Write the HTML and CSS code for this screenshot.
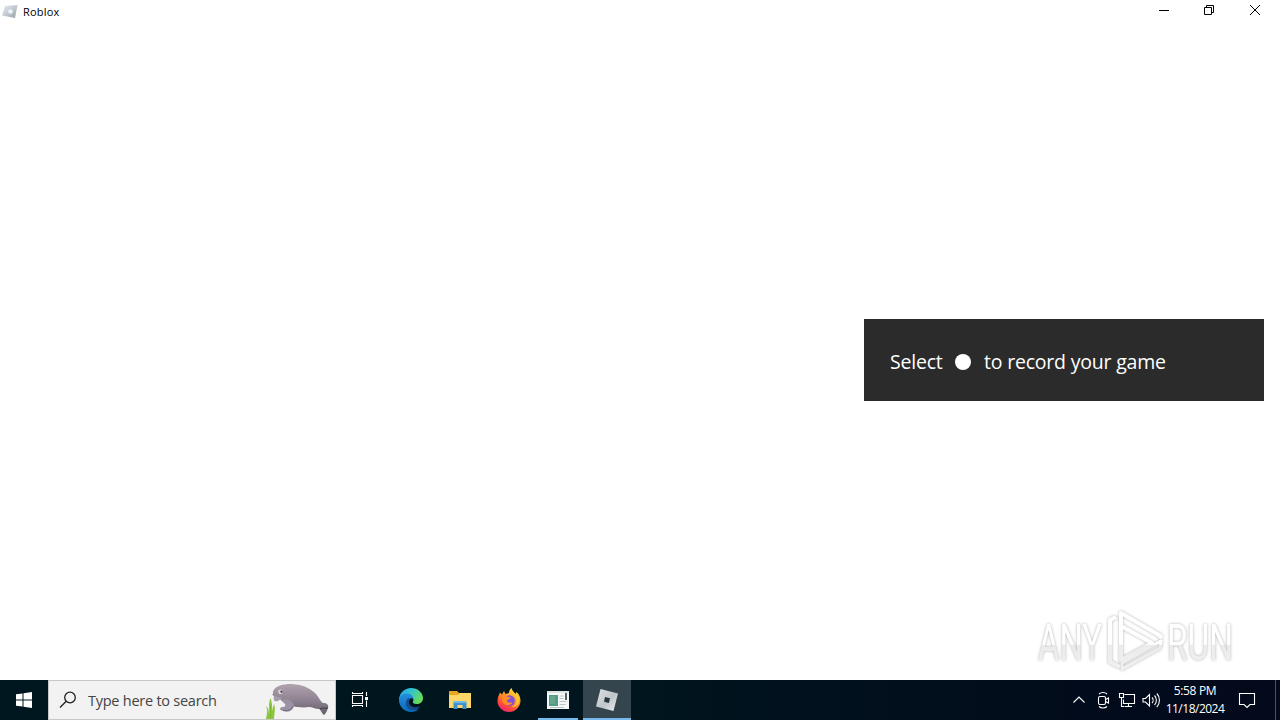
FILE: index.html
```
<!DOCTYPE html>
<html lang="en">
<head>
	<meta charset="UTF-8">
	<title>Roblox</title>
	<link rel="stylesheet" href="styles.css">
</head>
<body>
	<div class="titlebar">
		<svg class="app-icon" width="16" height="16" viewBox="0 0 16 16">
			<defs>
				<linearGradient id="tile" x1="0" y1="0" x2="1" y2="1">
					<stop offset="0" stop-color="#e8ebef"/>
					<stop offset=".5" stop-color="#c3cad1"/>
					<stop offset="1" stop-color="#929da6"/>
				</linearGradient>
			</defs>
			<path d="M3 2 15.500 1 13 14 0 11.500z" fill="url(#tile)"/>
			<circle cx="8.500" cy="7.500" r="2.200" fill="#edf4fa"/>
		</svg>
		<span class="title">Roblox</span>
		<div class="controls">
			<svg width="46" height="22" viewBox="0 0 46 22"><path d="M18 10.500h10" stroke="#000"/></svg>
			<svg width="46" height="22" viewBox="0 0 46 22"><path d="M17.500 7.500h7v7h-7zM19.500 7.500v-2h7v7h-2" fill="none" stroke="#000"/></svg>
			<svg width="46" height="22" viewBox="0 0 46 22"><path d="M17 5 27 15M27 5 17 15" stroke="#000"/></svg>
		</div>
	</div>

	<div class="content">
		<div class="toast">
			<span class="toast-select">Select</span>
			<i class="dot"></i>
			<span class="toast-text">to record your game</span>
		</div>
		<svg class="watermark" width="220" height="72" viewBox="0 0 220 72">
			<defs>
				<linearGradient id="wm" gradientUnits="userSpaceOnUse" x1="0" y1="6" x2="0" y2="66">
					<stop offset="0" stop-color="#fff"/>
					<stop offset=".540" stop-color="#fff"/>
					<stop offset=".550" stop-color="#ebebeb"/>
					<stop offset="1" stop-color="#f2f2f2"/>
				</linearGradient>
			</defs>
			<g class="wm-shape">
				<text class="wm-text" x="8" y="54" textLength="64" lengthAdjust="spacingAndGlyphs">ANY</text>
				<text class="wm-text" x="137" y="54" textLength="66" lengthAdjust="spacingAndGlyphs">RUN</text>
				<g fill="none" stroke="url(#wm)" stroke-width="4" stroke-linejoin="round">
					<path d="M86 11 80 14V56L90 61"/>
					<path d="M91 43V7L129 29 132 32"/>
					<path d="M91 20 122 37 91 54z"/>
					<path d="M131 35 92 57V63L130 42z" stroke-width="3"/>
				</g>
			</g>
		</svg>
	</div>

	<div class="taskbar">
		<div class="start">
			<svg width="16" height="16" viewBox="0 0 16 16"><path d="M0 2.300 6.500 1.400V7.500H0zM7.500 1.200 16 0v7.500H7.500zM0 8.500h6.500v6.100L0 13.700zM7.500 8.500H16V16l-8.500-1.200z" fill="#fff"/></svg>
		</div>
		<div class="search">
			<svg class="glass" width="18" height="18" viewBox="0 0 18 18"><circle cx="11" cy="6.500" r="5.300"/><path d="M7.200 10.300 1 16.500"/></svg>
			<span class="search-text">Type here to search</span>
			<svg class="manatee" width="68" height="38" viewBox="0 0 68 38">
				<defs>
					<linearGradient id="skin" x1="0" y1="0" x2="0" y2="1">
						<stop offset="0" stop-color="#b1a3ae"/>
						<stop offset=".5" stop-color="#908493"/>
						<stop offset="1" stop-color="#625b69"/>
					</linearGradient>
				</defs>
				<path d="M7 13C6 8 12 4 19 3.500 31 1.500 43 6 49 12c4 4 5 8 8 10 4 0 6 2 5 5-1 3-2 5-4 7-2-1-2-4-5-6-4 0-7-2-10-2-6 1-12 0-18-1-6-1-9-5-12-8-3 0-6-2-7-4z" fill="url(#skin)"/>
				<path d="M16 19c6-2 10 1 12 5 0 5-5 8-11 6-4-1-4-3-1-4 3 0 4-1 3-3z" fill="#9b92a6"/>
				<path d="M17 29c4 1.500 9 0 10-4" fill="none" stroke="#6d6576"/>
				<path d="M8 15c-1 4 0 6 4 5l4-3z" fill="#a79bab"/>
				<path d="M12 10c1-2 4-2 5 0l-1 3h-3z" fill="#d8d1dc"/>
				<circle cx="15.500" cy="10.700" r="1.100" fill="#39323e"/>
				<path d="M54 28c3-2 5 0 8-1" fill="none" stroke="#403947"/>
				<path d="M0 38c1-6 2-8 0-13 4 3 3 9 3 13zM2.500 38c2-8-1-14 2-21 2.500 6 1 14 1.500 21zM6 38c-1-5 0-10 2-15 2 6 0 10 0 15z" fill="#8cc63d"/>
				<path d="M4 37c1-6 0-9 1-14" fill="none" stroke="#6fac2c" stroke-width=".7"/>
			</svg>
		</div>
		<div class="task task-view">
			<svg width="18" height="18" viewBox="0 0 18 18" fill="none" stroke="#fff" stroke-width="1.100"><path d="M1.500 4.500h10v8h-10zM1.500 1v1.500h10V1M1.500 16v-1.500h10V16M15.500 1v4M15.500 9.500V16"/><path d="M14 6h3v3h-3z" fill="#fff" stroke="none"/></svg>
		</div>
		<div class="task">
			<svg width="24" height="24" viewBox="0 0 24 24">
				<defs>
					<linearGradient id="edgeTop" x1="0" y1="0" x2="1" y2=".5">
						<stop offset="0" stop-color="#2698e6"/>
						<stop offset=".45" stop-color="#30c2d6"/>
						<stop offset="1" stop-color="#65dc59"/>
					</linearGradient>
					<linearGradient id="edgeLeft" x1="0" y1="0" x2="0" y2="1">
						<stop offset="0" stop-color="#2390df"/>
						<stop offset="1" stop-color="#0b69b9"/>
					</linearGradient>
				</defs>
				<path d="M0 12A12 12 0 0 1 12 0c7 0 12 5 12 10 0 4-3 6-6.500 6-3 0-4-1-3.500-2.500 1.500-3-1-5.500-5-5.500-4.500 0-8 2-9 5z" fill="url(#edgeTop)"/>
				<path d="M0 12c0-4 4-6.500 8-6.500S14.500 8 14.500 11C12 9 8.500 12 9 15.500c.5 4 5 7 10.500 5.500l-2 1.700C9 26.500 0 21 0 12z" fill="url(#edgeLeft)"/>
				<path d="M9.500 10C6 12 6 17.500 9 20.500c3.500 3 8.500 2 12.500-2-6 2-11.500 0-11.500-4.500 0-1.300.5-2.300 1-3z" fill="#144e8e"/>
			</svg>
		</div>
		<div class="task">
			<svg width="22" height="20" viewBox="0 0 22 20">
				<path d="M0 2c0-.6.400-1 1-1h7l2 2h11c.6 0 1 .4 1 1v14H0z" fill="#e8a820"/>
				<path d="M0 5h9l2-2h11v15H0z" fill="#fdd868"/>
				<path d="M4.500 19v-7l1-1h11l1 1v7h-4v-4h-5v4z" fill="#3e91d1"/>
				<path d="M5 11h12v2H5z" fill="#70b8e8"/>
			</svg>
		</div>
		<div class="task">
			<svg width="24" height="24" viewBox="0 0 24 24">
				<defs>
					<linearGradient id="fox" x1=".8" y1="0" x2=".25" y2="1">
						<stop offset="0" stop-color="#fff04a"/>
						<stop offset=".4" stop-color="#ff9b24"/>
						<stop offset=".75" stop-color="#ff483e"/>
						<stop offset="1" stop-color="#e92274"/>
					</linearGradient>
				</defs>
				<path d="M3 4.500 5 6.500 7 3l1.500 3L12 5c0-2 1-4 2.500-5 .5 3 3 4 4 6l1-2c3 2.500 4 6 4 9-.3 6-5 11-11.500 11S.5 19 .5 13C.5 9 2 7 3 4.500z" fill="url(#fox)"/>
				<circle cx="12.500" cy="12.500" r="5.300" fill="#8150df"/>
				<path d="M5 9c3-2 5 0 7 0 2.500 0 1.500 2-1 2.500-2 .5-1 3 1.500 3 2 0 3 .5 3-.5 0 3-6 4.500-9 1.500C5 14 5 11 5 9z" fill="#ff8d24"/>
				<path d="M14.500 1c0 5 6 6 5 12-.5 4-3 5-5 6 4 0 7-2 7.500-6 .5-6-6-7-7.500-12z" fill="#ffcb31"/>
			</svg>
		</div>
		<div class="task running">
			<svg width="22" height="20" viewBox="0 0 22 20">
				<path d="M0 1h22v18H0z" fill="#f5f7f6"/>
				<path d="M0 1h22v2H0z" fill="#dce3e3"/>
				<path d="M2 5h9v11H2z" fill="#529b8b"/>
				<path d="M3 6h5v8H3z" fill="#65a58c"/>
				<path d="M12.500 6h4M12.500 8.500h4M12.500 11.500h7M12.500 14.500h6M3 17.500h14" stroke="#b7c3c4"/>
				<path d="M19 3v7" stroke="#17343b" stroke-width="1.500"/>
			</svg>
		</div>
		<div class="task running active">
			<svg width="24" height="24" viewBox="0 0 24 24">
				<defs>
					<linearGradient id="rbx" x1="0" y1="0" x2="1" y2="1">
						<stop offset="0" stop-color="#e0e3e6"/>
						<stop offset=".55" stop-color="#bec5c9"/>
						<stop offset="1" stop-color="#f2f3f4"/>
					</linearGradient>
				</defs>
				<path d="M5.500 1 23 5.500 18.500 23 1 18.500z" fill="url(#rbx)"/>
				<path d="M10 9 15 10.200 13.900 15 9 13.700z" fill="#263740"/>
			</svg>
		</div>

		<div class="tray">
			<svg width="24" height="24" viewBox="0 0 24 24"><path d="M6.500 14.500 12 9l5.500 5.500"/></svg>
			<svg width="24" height="24" viewBox="0 0 24 24"><rect x="7.500" y="8.500" width="7" height="8" rx="1.500"/><path d="M14.500 11.500 17.500 10v5l-3-1.500M8 6c2-2 6-2 8 0M8 18.500c2 2 6 2 8 0"/></svg>
			<svg width="24" height="24" viewBox="0 0 24 24"><path d="M9.500 6.500h10v9h-11v-4M13.500 15.500v3M10 18.500h7M4.500 5.500h4v4h-4zM6.500 9.500v9h3"/></svg>
			<svg width="24" height="24" viewBox="0 0 24 24"><path d="M4 10.500h2.500l4-4v11.500l-4-4H4zM13 9.500c1.500 1.500 1.500 4 0 5.500M15.500 7.500c2.500 2.500 2.500 7 0 9.500M17.800 5.500c3.500 3.500 3.500 10 0 13.500"/></svg>
		</div>
		<div class="clock">
			<span class="time">5:58 PM</span>
			<span class="date">11/18/2024</span>
		</div>
		<div class="notice">
			<svg width="18" height="18" viewBox="0 0 18 18"><path d="M1.500 2.500h15v11H12L9 16.500 6 13.500H1.500z"/></svg>
		</div>
		<div class="show-desktop"></div>
	</div>
</body>
</html>
```

FILE: styles.css
```
*{
	box-sizing: border-box;
}
body{
	margin: 0;
	width: 1280px;
	height: 720px;
	overflow: hidden;
	display: flex;
	flex-direction: column;
	background: #fff;
	font-family: "Open Sans", "Noto Sans", sans-serif;
}
svg{
	display: block;
	flex: none;
}
span{
	white-space: nowrap;
}
.titlebar{
	height: 24px;
	display: flex;
	padding-left: 2px;
}
.app-icon{
	margin-top: 4px;
}
.title{
	margin-left: 5px;
	font-size: 11px;
	line-height: 24px;
	letter-spacing: 0.2px;
	color: #000;
}
.controls{
	display: flex;
	margin-left: auto;
	margin-right: 1px;
}
.content{
	flex: 1;
	display: flex;
	flex-direction: column;
	align-items: flex-end;
	justify-content: space-between;
	padding: 295px 16px 2px 0;
}
.toast{
	width: 400px;
	height: 82px;
	padding: 3px 0 0 26px;
	display: flex;
	align-items: center;
	background: #2b2b2b;
	color: #fff;
	font-size: 19.500px;
}
.toast-select{
	width: 65px;
	letter-spacing: -0.2px;
}
.dot{
	width: 16px;
	height: 16px;
	margin-right: 13px;
	border-radius: 50%;
	background: #fff;
}
.toast-text{
	letter-spacing: -0.2px;
}
.watermark{
	margin-right: 14px;
}
.wm-shape{
	filter: drop-shadow(0 0 1.500px rgba(0,0,0,.3));
}
.wm-text{
	font-family: Roboto, sans-serif;
	font-size: 50px;
	fill: url(#wm);
}
.taskbar{
	height: 40px;
	display: flex;
	background: linear-gradient(90deg, #00171f, #00151e 50%, #020b1b 85%, #030a1c);
}
.start{
	width: 48px;
	display: flex;
	align-items: center;
	justify-content: center;
}
.search{
	width: 288px;
	display: flex;
	align-items: center;
	padding-left: 10px;
	background: #f2f2f2;
	border: 1px solid #c5c7c8;
}
.glass{
	fill: none;
	stroke: #222;
	stroke-width: 1.300;
}
.search-text{
	margin-left: 11px;
	font-size: 14.500px;
	letter-spacing: -0.25px;
	color: #444;
}
.manatee{
	margin-left: auto;
	margin-right: 1px;
}
.task{
	width: 48px;
	margin-right: 1px;
	display: flex;
	align-items: center;
	justify-content: center;
}
.task-view{
	margin-right: 3px;
}
.running{
	background: linear-gradient(#76b9ed, #76b9ed) center bottom / 40px 2px no-repeat;
}
.active{
	background-color: #34454e;
	background-size: 48px 2px;
}
.tray{
	display: flex;
	align-items: center;
	margin-left: auto;
}
.tray svg, .notice svg{
	fill: none;
	stroke: #fff;
	stroke-width: 1.100;
}
.clock{
	width: 64px;
	display: flex;
	flex-direction: column;
	align-items: center;
	padding-top: 2px;
	color: #fff;
	font-size: 12px;
	line-height: 18px;
	letter-spacing: -0.5px;
}
.time{
	letter-spacing: -0.35px;
}
.notice{
	width: 40px;
	display: flex;
	align-items: center;
	justify-content: center;
}
.show-desktop{
	width: 5px;
	margin-left: 8px;
	border-left: 1px solid #4b535f;
}
```
